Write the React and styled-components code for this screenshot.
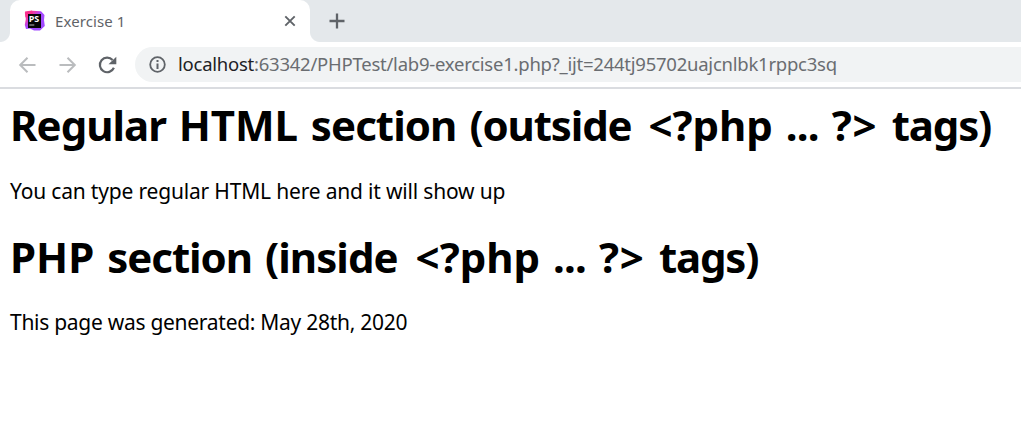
import React from "react";
import styled, { createGlobalStyle } from "styled-components";

const GlobalStyle = createGlobalStyle`
  * { box-sizing: border-box; }
  body { margin: 0; background: #fff; overflow: hidden; font-family: "Noto Sans", "Open Sans", sans-serif; }
`;

const Window = styled.div`
  width: 1021px;
  height: 421px;
  background: #fff;
`;

const TabStrip = styled.div`
  display: flex;
  height: 42px;
  background: #e4e8eb;
`;

const Foot = styled.div`
  width: 10px;
  height: 10px;
  align-self: flex-end;
  background: radial-gradient(circle at ${(p) => (p.$side === "left" ? "0 0" : "100% 0")}, #e4e8eb 9.5px, #fff 10.5px);
`;

const Tab = styled.div`
  display: flex;
  align-items: center;
  width: 300px;
  height: 42px;
  padding: 0 13px 0 14px;
  border-radius: 10px 10px 0 0;
  background: #fff;
`;

const TabTitle = styled.span`
  flex: 1;
  margin-left: 9px;
  color: #5f6368;
  font-size: 15px;
  line-height: 20px;
  letter-spacing: 0.1px;
  white-space: nowrap;
`;

const NewTab = styled.div`
  display: flex;
  align-items: center;
  margin-left: 9px;
  height: 42px;
`;

const Toolbar = styled.div`
  display: flex;
  align-items: center;
  height: 47px;
  padding-left: 17px;
  border-bottom: 2px solid #dadce0;
  background: #fff;
`;

const NavIcon = styled.svg`
  display: block;
  flex: none;
  width: 20px;
  height: 20px;
  margin-right: 20px;
`;

const AddressBar = styled.div`
  display: flex;
  align-items: center;
  flex: 1;
  height: 35px;
  margin-left: -2px;
  padding-left: 14px;
  border-radius: 18px 0 0 18px;
  background: #f1f3f4;
`;

const Url = styled.span`
  margin-left: 12px;
  padding-bottom: 2px;
  color: #6a6d71;
  font-size: 18.5px;
  line-height: 26px;
  letter-spacing: -0.24px;
  white-space: nowrap;
`;

const Host = styled.span`
  color: #202124;
`;

const Page = styled.main`
  padding: 6px 0 0 10px;
  color: #000;
`;

const Heading = styled.h1`
  margin: 0;
  font-size: 42px;
  font-weight: 700;
  line-height: 60px;
  word-spacing: 2px;
  white-space: nowrap;
`;

const Word = styled.span`
  letter-spacing: ${(p) => p.$tracking}px;
  margin-right: ${(p) => p.$after || 0}px;
`;

const Paragraph = styled.p`
  margin: ${(p) => p.$before}px 0 ${(p) => p.$after || 0}px;
  font-size: 21px;
  line-height: 30px;
  letter-spacing: ${(p) => p.$tracking}px;
  white-space: nowrap;
`;

const LogoText = styled.text`
  font: 700 9px "Noto Sans", sans-serif;
  fill: #fff;
`;

function Favicon() {
  return (
    <svg width="22" height="22" viewBox="0 0 22 22">
      <defs>
        <linearGradient id="glow" x1="0" y1="0" x2="1" y2="1">
          <stop offset="0" stopColor="#ff318c" />
          <stop offset=".28" stopColor="#e83bb0" />
          <stop offset=".45" stopColor="#a648ff" />
          <stop offset="1" stopColor="#9d4bff" />
        </linearGradient>
      </defs>
      <path d="M.8 2.5 8 .8 17 1.2 20.5 5 20 10 20.8 16 16 20.6 10 20.6 6 18.5 2 19 .8 15 1.8 9Z" fill="url(#glow)" />
      <path d="M1 1.5 8 .6 9 4 4 8 1.5 7Z" fill="#f9308f" />
      <rect x="4" y="4" width="13" height="14" fill="#050505" />
      <LogoText x="4.8" y="11.8" textLength="10.5" lengthAdjust="spacingAndGlyphs">PS</LogoText>
      <rect x="5.3" y="14.5" width="5" height="1" fill="#bbb" />
    </svg>
  );
}

function PhpTags() {
  return (
    <>
      <Word $tracking={0}>&lt;?php</Word> <Word $tracking={-0.8}>...</Word>{" "}
      <Word $tracking={0.8} $after={1.5}>?&gt;</Word> <Word $tracking={-1.2}>tags)</Word>
    </>
  );
}

export default function App() {
  return (
    <Window>
      <GlobalStyle />
      <TabStrip>
        <Foot $side="left" />
        <Tab>
          <Favicon />
          <TabTitle>Exercise 1</TabTitle>
          <svg width="14" height="14" viewBox="0 0 14 14" fill="none" stroke="#5f6368" strokeWidth="1.9">
            <path d="M2.3 2.3 11.7 11.7M11.7 2.3 2.3 11.7" />
          </svg>
        </Tab>
        <Foot $side="right" />
        <NewTab>
          <svg width="16" height="16" viewBox="0 0 16 16" fill="none" stroke="#5f6368" strokeWidth="2.3">
            <path d="M8 .5V15.5M.5 8H15.5" />
          </svg>
        </NewTab>
      </TabStrip>
      <Toolbar>
        <NavIcon viewBox="0 0 20 20" fill="none" stroke="#babcbe" strokeWidth="2">
          <path d="M18.5 10H4M10.5 2.7 3.2 10l7.3 7.3" />
        </NavIcon>
        <NavIcon viewBox="0 0 20 20" fill="none" stroke="#babcbe" strokeWidth="2">
          <path d="M2.5 10H17M10.5 2.7 17.8 10l-7.3 7.3" />
        </NavIcon>
        <NavIcon viewBox="0 0 20 20">
          <path d="M16.9 12.8A7.3 7.3 0 1 1 15.6 5" fill="none" stroke="#5f6368" strokeWidth="2.2" />
          <path d="M19.3 1.8V9.2H11.5Z" fill="#5f6368" />
        </NavIcon>
        <AddressBar>
          <svg width="17" height="17" viewBox="0 0 17 17">
            <circle cx="8.5" cy="8.5" r="7.3" fill="none" stroke="#5f6368" strokeWidth="1.8" />
            <path d="M8.5 7.5V13M8.5 4V6" stroke="#5f6368" strokeWidth="2" />
          </svg>
          <Url>
            <Host>localhost</Host>:63342/PHPTest/lab9-exercise1.php?_ijt=244tj95702uajcnlbk1rppc3sq
          </Url>
        </AddressBar>
      </Toolbar>
      <Page>
        <Heading>
          <Word $tracking={-1}>Regular</Word> <Word $tracking={-0.1}>HTML</Word>{" "}
          <Word $tracking={-0.93}>section</Word> <Word $tracking={-1.15} $after={4}>(outside</Word> <PhpTags />
        </Heading>
        <Paragraph $tracking={-0.18} $before={21} $after={21}>You can type regular HTML here and it will show up</Paragraph>
        <Heading>
          <Word $tracking={0}>PHP</Word> <Word $tracking={-1.05}>section</Word>{" "}
          <Word $tracking={-0.95} $after={5}>(inside</Word> <PhpTags />
        </Heading>
        <Paragraph $tracking={-0.28} $before={20}>This page was generated: May 28th, 2020</Paragraph>
      </Page>
    </Window>
  );
}
